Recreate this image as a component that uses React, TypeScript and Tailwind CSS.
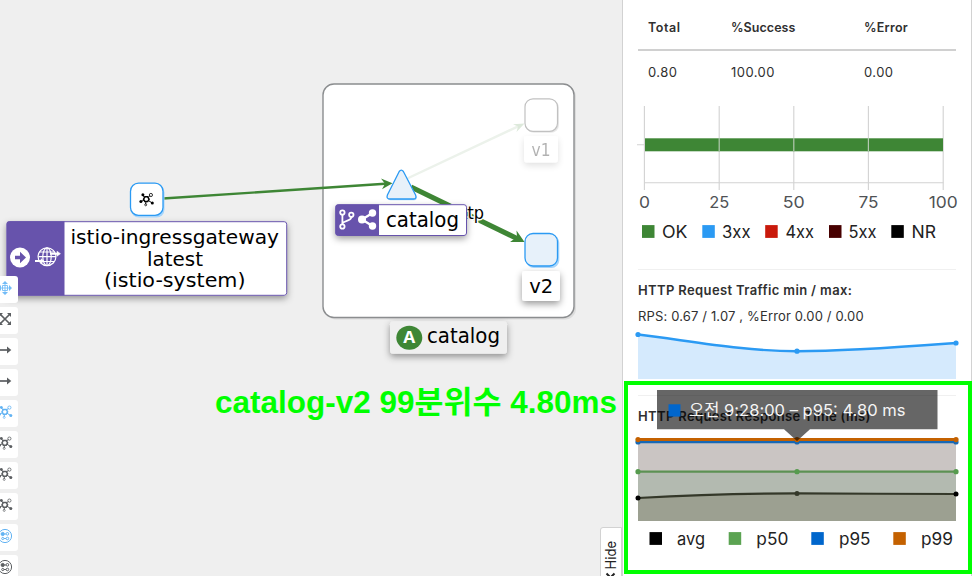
import React from 'react';

const UI = 'Inter, "Noto Sans CJK KR", sans-serif';
const GRAPH = '"DejaVu Sans", sans-serif';

type LabelProps = {
  x: number;
  y: number;
  w: number;
  size: number;
  children: string;
  font?: string;
  fill?: string;
  weight?: number;
};

function Label({ x, y, w, size, children, font = UI, fill = '#222', weight = 400 }: LabelProps) {
  return (
    <text x={x} y={y} textLength={w} lengthAdjust="spacingAndGlyphs" fontSize={size} fontFamily={font} fill={fill} fontWeight={weight}>
      {children}
    </text>
  );
}

function Topology({ color }: { color: string }) {
  return (
    <g stroke={color} fill={color} strokeWidth="1">
      <path d="M-1.8 -1.8L-3.4 -3.8M1.8 -1.6L3.6 -3.6M2.2 1.4L5.6 3.6M-2.4 1L-5.6 2.5M-.4 2.6L-.6 5" fill="none" />
      <path d="M-1.4 -2.4H1.4L2.8 0L1.4 2.4H-1.4L-2.8 0Z" fill="none" strokeWidth="1.5" />
      <circle cx="4.6" cy="-4.2" r="1.6" fill="none" strokeWidth=".8" />
      <circle cx="-3.4" cy="-4.4" r="1.5" stroke="none" />
      <circle cx="-5.4" cy="2.4" r="1.5" stroke="none" />
      <circle cx="6" cy="3.8" r="1.5" stroke="none" />
      <circle cx="-.6" cy="5.6" r="1" fill="none" strokeWidth=".7" />
    </g>
  );
}

function ToolIcon({ kind, color }: { kind: string; color: string }) {
  return (
    <svg className="h-[27px] w-[18px]" viewBox="0 0 18 27">
      {kind === 'move' && (
        <g transform="translate(5 12)" fill={color}>
          <path d="M0 -7L3 -4H-3ZM0 7L3 4H-3ZM7 0L4 -3V3ZM-7 0L-4 -3V3Z" />
          <path d="M-2.5 -2.5H2.5V2.5H-2.5ZM0 -4.5V4.5M-4.5 0H4.5" fill="none" stroke={color} strokeWidth=".9" />
        </g>
      )}
      {kind === 'fit' && (
        <g transform="translate(5 12)" stroke={color} fill={color}>
          <path d="M-5 -5L5 5M5 -5L-5 5" strokeWidth="1.6" />
          <path d="M2 -6H6V-2ZM-2 -6H-6V-2ZM2 6H6V2ZM-2 6H-6V2Z" stroke="none" />
        </g>
      )}
      {kind === 'arrow' && (
        <g>
          <path d="M0 12H8" stroke={color} strokeWidth="1.7" />
          <path d="M7 8.6L11.3 12L7 15.4Z" fill={color} />
        </g>
      )}
      {kind === 'topology' && (
        <g transform="translate(4.8 11.8)"><Topology color={color} /></g>
      )}
      {kind === 'group' && (
        <g transform="translate(5 12)" fill="none" stroke={color} strokeWidth="1">
          <circle r="6.6" />
          <circle cx="-2.3" cy="-2" r="1.6" fill={color} />
          <circle cx="2.4" cy="-2.2" r="1.3" />
          <circle cx="-2.2" cy="2.5" r="1.1" />
          <circle cx="2.4" cy="2.5" r="1.3" />
          <path d="M-.6 -2H1M-1 2.5H1" />
        </g>
      )}
    </svg>
  );
}

const tools = [
  ['move', '#73bcf7'],
  ['fit', '#5b5e61'],
  ['arrow', '#5b5e61'],
  ['arrow', '#5b5e61'],
  ['topology', '#62b3f3'],
  ['topology', '#5b5e61'],
  ['topology', '#5b5e61'],
  ['topology', '#5b5e61'],
  ['group', '#62b3f3'],
  ['group', '#5b5e61'],
];

function Graph() {
  return (
    <svg className="block h-[576px] w-[622px]" viewBox="0 0 622 576">
      <defs>
        <filter id="lift" x="-20%" y="-40%" width="140%" height="200%">
          <feDropShadow dx="0" dy="3" stdDeviation="3.5" floodColor="#000" floodOpacity=".4" />
        </filter>
      </defs>

      <rect x="325" y="86" width="251" height="233.500" rx="11" fill="#dcdcdc" />
      <rect x="323" y="84" width="251" height="233.500" rx="11" fill="#fff" stroke="#8b8d8f" strokeWidth="1.4" />

      <path d="M402 181L521 125" stroke="#ecf2eb" strokeWidth="2.400" />
      <path d="M524.500 123.500L513 124.200L518 126.600L516.500 132Z" fill="#dde9db" />
      <path d="M163 198.500L385 183.800" stroke="#3e8635" strokeWidth="2.400" />
      <path d="M392.500 183.300L381 178.600L385 183.700L382 189.200Z" fill="#3e8635" />
      <path d="M411 187L517 238.500" stroke="#3e8635" strokeWidth="5.200" />
      <path d="M524.500 242L516.500 230.500L517 237L510 242Z" fill="#3e8635" />
      <g stroke="#fff" strokeWidth="3" paintOrder="stroke" strokeLinejoin="round">
        <Label x={451} y={219} w={33} size={17} font={GRAPH} fill="#000">http</Label>
      </g>

      <rect x="131" y="184.500" width="33.500" height="33" rx="8" fill="#a9d6fb" />
      <rect x="130.500" y="183.200" width="32.500" height="32.200" rx="8" fill="#fff" stroke="#2b9af3" strokeWidth="1.300" />
      <g transform="translate(146.300 199.200)"><Topology color="#000" /></g>

      <rect x="526" y="99.800" width="33" height="33" rx="8" fill="#e8e8e8" />
      <rect x="525" y="98.800" width="32.500" height="32.500" rx="8" fill="#fff" stroke="#c1c1c1" strokeWidth="1.200" />
      <rect x="526" y="235" width="33.300" height="33" rx="8" fill="#a9d6fb" />
      <rect x="525" y="233.500" width="32.500" height="32.500" rx="8" fill="#e7f1fa" stroke="#2b9af3" strokeWidth="1.300" />

      <path d="M399.200 171.500Q401.300 168.600 403.400 171.500L415.600 195Q417 199.300 413.500 199.300H390Q386 199.300 387.400 195Z" fill="#a9d6fb" transform="translate(.6 1)" />
      <path d="M399.200 171.500Q401.300 168.600 403.400 171.500L415.600 195Q417 199 413.500 199H390Q386 199 387.400 195Z" fill="#e7f1fa" stroke="#2b9af3" strokeWidth="1.300" />

      <g opacity=".3">
        <rect x="524" y="136" width="34" height="26.500" rx="3" fill="#fff" filter="url(#lift)" />
        <Label x={531.5} y={156} w={19} size={17} font={GRAPH} fill="#000">v1</Label>
      </g>
      <rect x="522" y="271" width="38" height="30" rx="3" fill="#fff" filter="url(#lift)" />
      <Label x={529.3} y={292.500} w={24} size={20} font={GRAPH} fill="#000">v2</Label>

      <rect x="335.500" y="204.500" width="131" height="31" rx="2.500" fill="#fff" filter="url(#lift)" />
      <path d="M379 204.500H338a2.500 2.500 0 0 0-2.500 2.500V233a2.500 2.500 0 0 0 2.500 2.500H379Z" fill="#6753ac" />
      <rect x="335.700" y="204.700" width="130.800" height="30.800" rx="2.500" fill="none" stroke="#6753ac" />
      <g fill="none" stroke="#fff" strokeWidth="1.800">
        <circle cx="342.400" cy="212.500" r="2.200" />
        <circle cx="342.400" cy="226.500" r="2.200" />
        <circle cx="351.300" cy="214.800" r="2.200" />
        <path d="M342.400 214.700V224.300M351.300 217C351.300 221.500 344 220 342.500 223.500" />
        <path d="M372.500 213L362 219.500L372.500 226" strokeWidth="2.400" />
      </g>
      <g fill="#fff"><circle cx="362" cy="219.500" r="4" /><circle cx="372.500" cy="213" r="3.700" /><circle cx="372.500" cy="226" r="3.700" /></g>
      <Label x={386} y={227} w={73} size={20.500} font={GRAPH} fill="#000">catalog</Label>

      <rect x="390" y="321.300" width="117" height="32.500" rx="3" fill="#efefef" filter="url(#lift)" />
      <ellipse cx="409.300" cy="337.800" rx="13" ry="12" fill="#3e8635" />
      <Label x={403.200} y={343.200} w={12} size={15.500} font='"Open Sans", sans-serif' fill="#fff" weight={700}>A</Label>
      <Label x={427} y={342.800} w={73} size={20.500} font={GRAPH} fill="#000">catalog</Label>

      <rect x="6.500" y="221.500" width="280.500" height="74" rx="2.500" fill="#fff" filter="url(#lift)" />
      <path d="M64.500 221.300H9a2.500 2.500 0 0 0-2.500 2.500V293a2.500 2.500 0 0 0 2.500 2.500H64.500Z" fill="#6753ac" />
      <rect x="7" y="221.700" width="279.700" height="73.600" rx="2.500" fill="none" stroke="#6753ac" />
      <circle cx="20" cy="257.500" r="10" fill="#fff" />
      <path d="M15 255.700H20V251.800L26 257.500L20 263.200V259.300H15Z" fill="#6753ac" />
      <g stroke="#fff" fill="none" strokeWidth="1.200">
        <circle cx="47" cy="256.700" r="8.900" />
        <ellipse cx="47" cy="256.700" rx="4.200" ry="8.900" />
        <path d="M47 248V265.500M39 252H55M38.500 256.700H56M40 261.500H54" />
        <path d="M50 253.700H57M35 261H41" strokeWidth="1.900" />
        <path d="M57 251.200L60.500 253.700L57 256.200ZM41 258.700L44 261L41 263.400Z" fill="#fff" strokeWidth=".5" />
      </g>
      <Label x={70.500} y={244.300} w={208.500} size={20} font={GRAPH} fill="#000">istio-ingressgateway</Label>
      <Label x={147} y={265.700} w={56} size={20} font={GRAPH} fill="#000">latest</Label>
      <Label x={104} y={287} w={141.500} size={20} font={GRAPH} fill="#000">(istio-system)</Label>

      <Label x={215} y={412.700} w={402} size={30.500} font='"Liberation Sans", "Noto Sans CJK KR", sans-serif' fill="#00ff00" weight={700}>catalog-v2 99분위수 4.80ms</Label>
    </svg>
  );
}

type Entry = { x: number; tx: number; w: number; color: string; text: string };

function Legend({ items, y }: { items: Entry[]; y: number }) {
  return (
    <g>
      {items.map((i) => (
        <g key={i.text}>
          <rect x={i.x} y={y - 12.600} width="12.500" height="12.800" fill={i.color} />
          <Label x={i.tx} y={y} w={i.w} size={17}>{i.text}</Label>
        </g>
      ))}
    </g>
  );
}

const codes: Entry[] = [
  { x: 642, tx: 662, w: 25.5, color: '#3e8635', text: 'OK' },
  { x: 702.3, tx: 722, w: 28.5, color: '#2b9af3', text: '3xx' },
  { x: 765.2, tx: 785.5, w: 28.5, color: '#c9190b', text: '4xx' },
  { x: 829, tx: 848.5, w: 28, color: '#470000', text: '5xx' },
  { x: 891.3, tx: 911.5, w: 24.5, color: '#000', text: 'NR' },
];

const series: Entry[] = [
  { x: 649.5, tx: 677, w: 28, color: '#000', text: 'avg' },
  { x: 728.7, tx: 756.3, w: 32, color: '#5ba352', text: 'p50' },
  { x: 811.3, tx: 839, w: 31.5, color: '#0066cc', text: 'p95' },
  { x: 893.3, tx: 921, w: 32, color: '#c46100', text: 'p99' },
];

const ticks = [
  { x: 644.4, text: '0', w: 11 },
  { x: 719.2, text: '25', w: 20 },
  { x: 793.8, text: '50', w: 22 },
  { x: 868.4, text: '75', w: 20 },
  { x: 943.2, text: '100', w: 29 },
];

function RequestBars() {
  return (
    <svg className="block h-[164px] w-[318px] overflow-visible" viewBox="638 106 318 164">
      <g stroke="#d2d2d2" strokeWidth="1.100">
        <path d="M637 144.700H644M644 182.800H943.500" />
        {ticks.map((t) => <path key={t.x} d={`M${t.x} 106V190`} />)}
      </g>
      <rect x="645" y="138.300" width="298" height="13" fill="#3e8635" />
      {[719.2, 793.8, 868.4].map((x) => <path key={x} d={`M${x} 138V151.500`} stroke="#b4c9b1" strokeWidth="1.200" />)}
      {ticks.map((t) => (
        <Label key={t.text} x={t.x - t.w / 2} y={207.700} w={t.w} size={16.500} fill="#4f5255">{t.text}</Label>
      ))}
      <Legend items={codes} y={237.700} />
      <path d="M638 269.500H956" stroke="#f0f0f0" />
    </svg>
  );
}

function TrafficChart() {
  return (
    <svg className="block h-[49px] w-[318px] overflow-visible" viewBox="638 330 318 49">
      <path d="M638 334.500C691 341 744 351.200 797 351.200C850 351.200 903 347 956 343V379H638Z" fill="#d5eafd" />
      <path d="M638 334.500C691 341 744 351.200 797 351.200C850 351.200 903 347 956 343" fill="none" stroke="#2b9af3" strokeWidth="2.400" />
      <g fill="#2b9af3"><circle cx="638" cy="334.500" r="2.600" /><circle cx="797" cy="351.200" r="2.600" /><circle cx="956" cy="343" r="2.600" /></g>
    </svg>
  );
}

function ResponseChart() {
  return (
    <svg className="block h-[114px] w-[318px] overflow-visible" viewBox="638 434 318 114">
      <rect x="638" y="440" width="318" height="32" fill="#cac5c3" />
      <rect x="638" y="472" width="318" height="49" fill="#b3bab0" />
      <path d="M638 498C691 495 744 493.400 797 493.400C850 493.400 903 494 956 494V521H638Z" fill="#9ca091" />
      <path d="M638 498C691 495 744 493.400 797 493.400C850 493.400 903 494 956 494" fill="none" stroke="#343829" strokeWidth="2.100" />
      <path d="M638 471.700H956" stroke="#5c9153" strokeWidth="2.300" />
      <path d="M638 442.200H956" stroke="#1768b5" strokeWidth="2.200" />
      <path d="M638 439.600H956" stroke="#c46100" strokeWidth="3" />
      {[638, 797, 956].map((x, i) => (
        <g key={x}>
          <circle cx={x} cy={[498, 493.4, 494][i]} r="2.500" fill={i === 1 ? '#343829' : '#000'} />
          <circle cx={x} cy="471.700" r="2.600" fill="#569b4e" />
          <circle cx={x} cy="442" r="2.600" fill="#1768b5" />
          <circle cx={x} cy="439.600" r="2.600" fill="#c46100" />
        </g>
      ))}
      <Legend items={series} y={544.700} />
      <path d="M657 390H937.500V429.200H810L797 441L784 429.200H657Z" fill="#000" fillOpacity=".6" />
      <rect x="668.500" y="404.300" width="12" height="12.300" fill="#0066cc" />
      <Label x={689} y={415.800} w={216.500} size={16.500} fill="#f5f5f5">오전 9:28:00 – p95: 4.80 ms</Label>
    </svg>
  );
}

export default function App() {
  return (
    <main className="flex h-[576px] w-[977px] overflow-hidden bg-white font-[Inter,sans-serif] text-[13px] text-[#303030]">
      <section className="relative h-[576px] w-[622px] shrink-0 bg-[#efefef]">
        <Graph />
        <nav className="absolute left-0 top-[276px] flex w-[18px] flex-col gap-1">
          {tools.map(([kind, color], i) => (
            <button key={i} className="h-[27px] w-[18px] shrink-0 rounded-r-[3px] bg-white">
              <ToolIcon kind={kind} color={color} />
            </button>
          ))}
        </nav>
        <div className="absolute left-[600px] top-[527px] h-[60px] w-[22px] rounded-tl-[3px] border border-[#d2d2d2] bg-white">
          <svg className="h-[49px] w-5" viewBox="601 528 20 49">
            <g transform="translate(616 569.500) rotate(-90)">
              <Label x={0} y={0} w={28.5} size={14}>Hide</Label>
            </g>
            <path d="M606.500 573.500L609.500 576.500M614.500 573.500L611.500 576.500" fill="none" stroke="#222" strokeWidth="2" />
          </svg>
        </div>
      </section>

      <aside className="relative flex h-[576px] w-[350px] shrink-0 flex-col border-x border-[#d2d2d2] bg-white pl-[15px] pr-[15px]">
        <div className="grid h-[51px] w-[318px] shrink-0 grid-cols-[83px_133px_1fr] items-center border-b-2 border-[#d0d0d0] pl-[10px] pt-[7px] text-[12.500px] font-semibold">
          <span className="tracking-[0.550px]">Total</span>
          <span className="tracking-[0.050px]">%Success</span>
          <span className="tracking-[0.250px]">%Error</span>
        </div>
        <div className="grid h-[55px] w-[318px] shrink-0 grid-cols-[83px_133px_1fr] items-start pl-[10px] pt-[11px] text-[13px] leading-5 tracking-[0.450px]">
          <span>0.80</span>
          <span>100.00</span>
          <span>0.00</span>
        </div>
        <RequestBars />
        <div className="flex h-[60px] shrink-0 flex-col pt-[10px] leading-5">
          <h2 className="whitespace-nowrap font-semibold tracking-[0.370px]">HTTP Request Traffic min / max:</h2>
          <p className="mt-[6px] whitespace-nowrap tracking-[0.150px]">RPS: 0.67 / 1.07 , %Error 0.00 / 0.00</p>
        </div>
        <TrafficChart />
        <div className="mt-4 h-[39px] w-[318px] shrink-0 border-t border-[#f0f0f0] pt-[10px] leading-5">
          <h2 className="whitespace-nowrap font-semibold tracking-[0.350px]">HTTP Request Response Time (ms)</h2>
        </div>
        <ResponseChart />
        <div className="absolute left-[1px] top-[381px] h-[193px] w-[348px] border-4 border-[#00ff00]" />
      </aside>
    </main>
  );
}
